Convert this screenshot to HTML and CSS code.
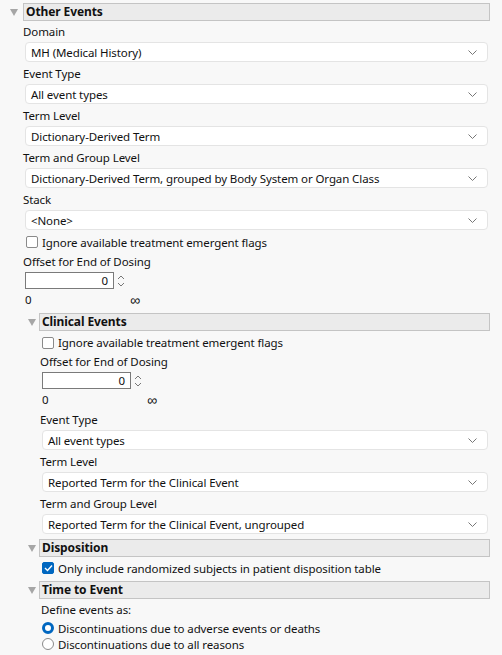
FILE: index.html
```html
<!DOCTYPE html>
<html>
 <head>
  <title>Event Options</title>
  <link rel="stylesheet" href="styles.css">
 </head>
 <body>
  <div class="page">

   <div class="outline">
    <div class="outline-head">
     <span class="tri"></span>
     <div class="title">Other Events</div>
    </div>
    <div class="outline-body">
     <div class="label first">Domain</div>
     <div class="combo"><span>MH (Medical History)</span><svg class="chev" width="9" height="5" viewBox="0 0 9 5"><path d="M0.5 0.5 L4.5 4.5 L8.5 0.5" fill="none" stroke="#777" stroke-width="1"/></svg></div>

     <div class="label">Event Type</div>
     <div class="combo"><span>All event types</span><svg class="chev" width="9" height="5" viewBox="0 0 9 5"><path d="M0.5 0.5 L4.5 4.5 L8.5 0.5" fill="none" stroke="#777" stroke-width="1"/></svg></div>

     <div class="label">Term Level</div>
     <div class="combo"><span>Dictionary-Derived Term</span><svg class="chev" width="9" height="5" viewBox="0 0 9 5"><path d="M0.5 0.5 L4.5 4.5 L8.5 0.5" fill="none" stroke="#777" stroke-width="1"/></svg></div>

     <div class="label">Term and Group Level</div>
     <div class="combo"><span>Dictionary-Derived Term, grouped by Body System or Organ Class</span><svg class="chev" width="9" height="5" viewBox="0 0 9 5"><path d="M0.5 0.5 L4.5 4.5 L8.5 0.5" fill="none" stroke="#777" stroke-width="1"/></svg></div>

     <div class="label">Stack</div>
     <div class="combo"><span>&lt;None&gt;</span><svg class="chev" width="9" height="5" viewBox="0 0 9 5"><path d="M0.5 0.5 L4.5 4.5 L8.5 0.5" fill="none" stroke="#777" stroke-width="1"/></svg></div>

     <div class="check-row"><span class="box"></span>Ignore available treatment emergent flags</div>

     <div class="label tight">Offset for End of Dosing</div>
     <div class="spin-row">
      <div class="num">0</div>
      <svg class="spin" width="8" height="14" viewBox="0 0 8 14"><path d="M1 5 L4 2 L7 5 M1 9 L4 12 L7 9" fill="none" stroke="#777" stroke-width="1"/></svg>
     </div>
     <div class="range"><span class="lo">0</span><span class="inf">&infin;</span></div>

     <div class="outline nested">
      <div class="outline-head">
       <span class="tri"></span>
       <div class="title">Clinical Events</div>
      </div>
      <div class="outline-body">
       <div class="check-row first"><span class="box"></span>Ignore available treatment emergent flags</div>

       <div class="label tight">Offset for End of Dosing</div>
       <div class="spin-row">
        <div class="num">0</div>
        <svg class="spin" width="8" height="14" viewBox="0 0 8 14"><path d="M1 5 L4 2 L7 5 M1 9 L4 12 L7 9" fill="none" stroke="#777" stroke-width="1"/></svg>
       </div>
       <div class="range short"><span class="lo">0</span><span class="inf">&infin;</span></div>

       <div class="label tight">Event Type</div>
       <div class="combo"><span>All event types</span><svg class="chev" width="9" height="5" viewBox="0 0 9 5"><path d="M0.5 0.5 L4.5 4.5 L8.5 0.5" fill="none" stroke="#777" stroke-width="1"/></svg></div>

       <div class="label">Term Level</div>
       <div class="combo"><span>Reported Term for the Clinical Event</span><svg class="chev" width="9" height="5" viewBox="0 0 9 5"><path d="M0.5 0.5 L4.5 4.5 L8.5 0.5" fill="none" stroke="#777" stroke-width="1"/></svg></div>

       <div class="label">Term and Group Level</div>
       <div class="combo"><span>Reported Term for the Clinical Event, ungrouped</span><svg class="chev" width="9" height="5" viewBox="0 0 9 5"><path d="M0.5 0.5 L4.5 4.5 L8.5 0.5" fill="none" stroke="#777" stroke-width="1"/></svg></div>
      </div>
     </div>

     <div class="outline nested disposition">
      <div class="outline-head">
       <span class="tri"></span>
       <div class="title">Disposition</div>
      </div>
      <div class="outline-body">
       <div class="check-row tall"><span class="box checked"><svg width="9" height="8" viewBox="0 0 9 8"><path d="M1 4 L3.5 6.5 L8 1.5" fill="none" stroke="#fff" stroke-width="1.4"/></svg></span>Only include randomized subjects in patient disposition table</div>
      </div>
     </div>

     <div class="outline nested">
      <div class="outline-head">
       <span class="tri"></span>
       <div class="title">Time to Event</div>
      </div>
      <div class="outline-body">
       <div class="define">Define events as:</div>
       <div class="radio-row"><span class="radio on"></span>Discontinuations due to adverse events or deaths</div>
       <div class="radio-row"><span class="radio"></span>Discontinuations due to all reasons</div>
      </div>
     </div>

    </div>
   </div>

  </div>
 </body>
</html>
```
FILE: styles.css
```css
body {
 margin:         0;
 background:     #f8f8f8;
 font-family:    "Segoe UI", "Noto Sans", sans-serif;
 font-size:      11.5px;
 letter-spacing: -0.1px;
 color:          #111111;
}

.page {
 padding: 3px 12px 0 8px;
}

.outline-head {
 display:     flex;
 align-items: center;
}

.tri {
 width:    15px;
 height:   18px;
 position: relative;
}

.tri::before {
 content:      "";
 position:     absolute;
 left:         2px;
 top:          6px;
 border-left:  4.5px solid transparent;
 border-right: 4.5px solid transparent;
 border-top:   7px solid #a6a6a6;
}

.title {
 flex:         1;
 height:       16px;
 line-height:  16px;
 padding-left: 2px;
 border:       1px solid #c4c4c4;
 background:   #ebebeb;
 font-weight:  bold;
 font-size:    12px;
}

.outline-body {
 padding-left:  15px;
 padding-right: 2px;
}

.nested {
 margin-left:  3px;
 margin-right: -2px;
 margin-top:   2px;
}

.nested .tri {
 width: 13px;
}

.nested .outline-body {
 padding-left:  14px;
 padding-right: 2px;
}

.disposition {
 margin-top: 5px;
}

.label {
 height:      20px;
 line-height: 20px;
 padding-top: 2px;
}

.label.first {
 padding-top: 1px;
}

.label.tight {
 padding-top: 0;
}

.combo {
 margin-left:     2px;
 height:          18px;
 border:          1px solid #e4e4e4;
 border-radius:   4px;
 background:      #ffffff;
 display:         flex;
 align-items:     center;
 justify-content: space-between;
 padding:         0 10px 0 5px;
}

.check-row {
 display:     flex;
 align-items: center;
 height:      20px;
 padding-top: 2px;
 margin-left: 3px;
}

.nested .check-row {
 margin-left: 2px;
}

.check-row.first {
 height: 19px;
}

.check-row.tall {
 height:      22px;
 padding-top: 0;
}

.box {
 width:           10px;
 height:          10px;
 border:          1px solid #8a8a8a;
 border-radius:   2px;
 background:      #ffffff;
 margin-right:    4px;
 display:         flex;
 align-items:     center;
 justify-content: center;
}

.box.checked {
 background:   #0067c0;
 border-color: #0067c0;
}

.spin-row {
 display:     flex;
 align-items: center;
 margin-left: 2px;
 height:      17px;
}

.num {
 width:         82px;
 height:        15px;
 line-height:   15px;
 border:        1px solid #7a7a7a;
 background:    #ffffff;
 text-align:    right;
 padding-right: 5px;
}

.spin {
 margin-left: 3px;
}

.range {
 display:     flex;
 margin-left: 2px;
 height:      22px;
 line-height: 22px;
}

.range.short {
 height: 21px;
}

.range .lo {
 width: 105px;
}

.range .inf {
 font-size: 14px;
}

.define {
 height:       21px;
 line-height:  21px;
 padding-left: 1px;
}

.radio-row {
 display:     flex;
 align-items: center;
 height:      16px;
 margin-left: 2px;
}

.radio {
 width:         10px;
 height:        10px;
 border:        1px solid #8a8a8a;
 border-radius: 50%;
 background:    #ffffff;
 margin-right:  4px;
}

.radio.on {
 width:  6px;
 height: 6px;
 border: 3px solid #0067c0;
}
```
